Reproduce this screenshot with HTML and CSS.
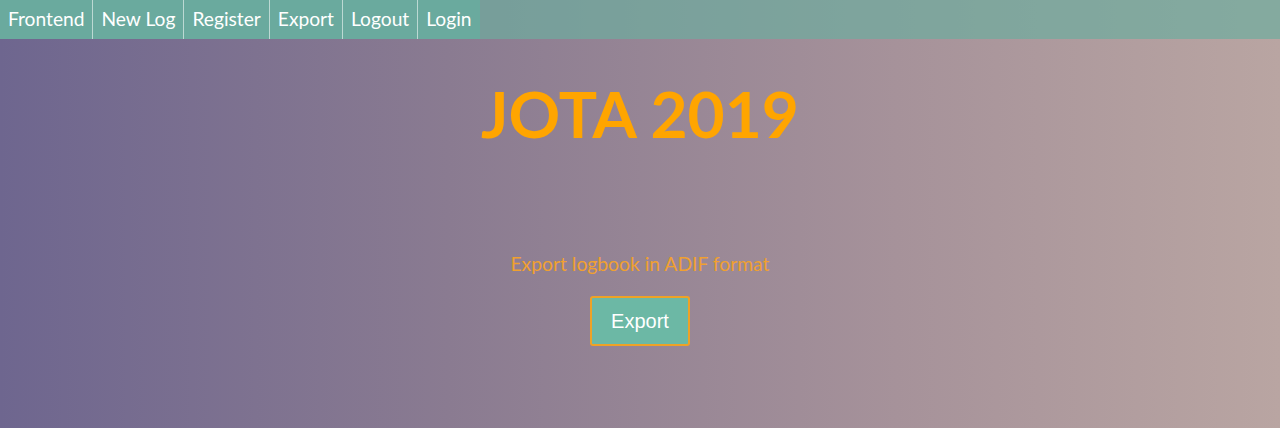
FILE: index.html
```html
<!DOCTYPE html>
<html>
<head>
<meta charset="utf-8">
<link rel="stylesheet" href="styles.css">
</head>
<body>
<nav class="topnav">
  <a class="nav-item" href="#">Frontend</a>
  <a class="nav-item" href="#">New Log</a>
  <a class="nav-item" href="#">Register</a>
  <a class="nav-item" href="#">Export</a>
  <a class="nav-item" href="#">Logout</a>
  <a class="nav-item" href="#">Login</a>
</nav>
<main class="content">
  <h1 class="title">JOTA 2019</h1>
  <p class="subtitle">Export logbook in ADIF format</p>
  <button class="export-btn" type="button">Export</button>
</main>
</body>
</html>
```
FILE: styles.css
```css
html, body {
  margin: 0;
  padding: 0;
  height: 100%;
}
body {
  background: linear-gradient(to right, #6e668f 0%, #8a7b91 35%, #a6929a 70%, #b9a5a2 100%);
  font-family: Lato, "Liberation Sans", sans-serif;
}
.topnav {
  display: flex;
  height: 39px;
  background: rgba(109, 172, 158, 0.7);
}
.nav-item {
  display: flex;
  align-items: center;
  padding: 0 8px 3px;
  background: #6aaa9e;
  color: #ffffff;
  text-decoration: none;
  font-size: 19.2px;
  border-right: 1px solid rgba(255, 255, 255, 0.55);
}
.nav-item:last-child {
  border-right: none;
}
.content {
  display: flex;
  flex-direction: column;
  align-items: center;
}
.title {
  margin: 35px 0 0;
  font-size: 64px;
  font-weight: 700;
  color: #ffa500;
  line-height: 80px;
}
.subtitle {
  margin: 98px 0 0;
  font-size: 19.3px;
  color: #f0a030;
  line-height: 24px;
}
.export-btn {
  margin-top: 20px;
  width: 100px;
  height: 50px;
  background: #6cb8a5;
  border: 2px solid #eea226;
  border-radius: 3px;
  color: #ffffff;
  font-family: "Liberation Sans", Arial, sans-serif;
  font-size: 20px;
}
```
